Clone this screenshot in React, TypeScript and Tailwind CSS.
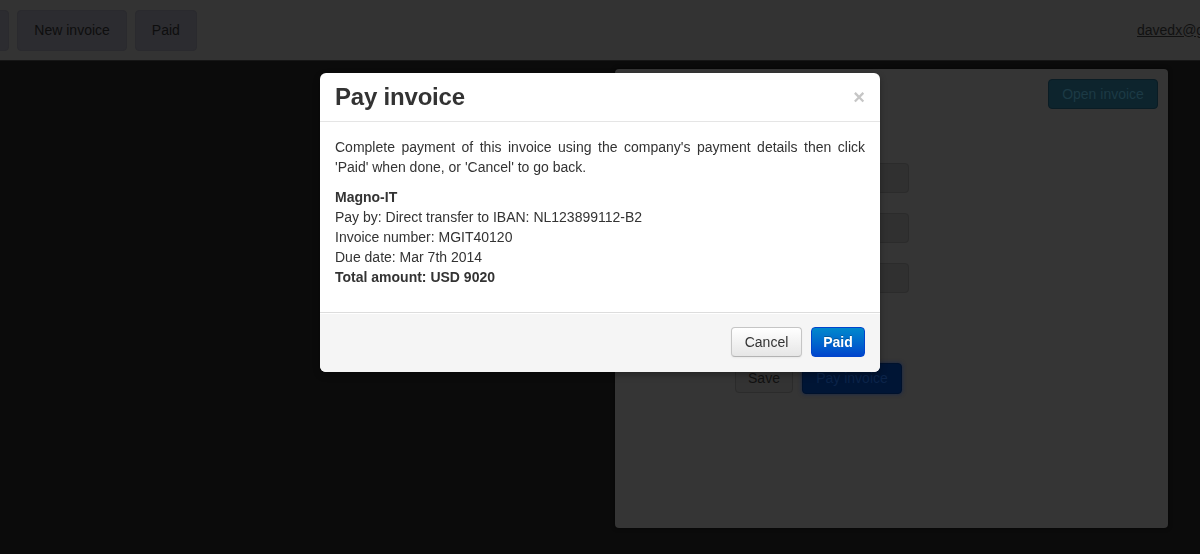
const navButtons = ["Invoices", "New invoice", "Paid"];

const details = [
  "Pay by: Direct transfer to IBAN: NL123899112-B2",
  "Invoice number: MGIT40120",
  "Due date: Mar 7th 2014",
];

function PayInvoiceModal() {
  return (
    <div className="fixed inset-0 z-10">
      <div className="mx-auto mt-[73px] w-[560px] overflow-hidden rounded-[6px] bg-white text-[#333] shadow-[0_3px_7px_rgba(0,0,0,0.3)]">
        <div className="flex items-start justify-between border-b border-[#e5e5e5] px-[15px] py-[9px]">
          <h3 className="text-[24px] font-bold leading-[30px] tracking-[-0.2px]">Pay invoice</h3>
          <button className="mt-[5px] text-[20px] font-bold leading-[20px] text-[#c6c6c6]">×</button>
        </div>
        <div className="px-[15px] pt-[15px] pb-[15px] text-[14px] leading-[20px]">
          <p className="mb-[10px] text-justify">
            Complete payment of this invoice using the company's payment details then click 'Paid' when
            done, or 'Cancel' to go back.
          </p>
          <p className="mb-[10px]">
            <strong>Magno-IT</strong>
            <br />
            {details.map((line) => (
              <span key={line}>
                {line}
                <br />
              </span>
            ))}
            <strong>Total amount: USD 9020</strong>
          </p>
        </div>
        <div className="flex justify-end gap-[9px] border-t border-[#dddddd] bg-[#f5f5f5] px-[15px] pt-[14px] pb-[15px] shadow-[inset_0_1px_0_#ffffff]">
          <button className="h-[30px] w-[71px] rounded-[4px] border border-[#c5c5c5] border-b-[#b3b3b3] bg-gradient-to-b from-white to-[#e6e6e6] text-[14px] text-[#333] shadow-[0_1px_2px_rgba(0,0,0,0.05)]">
            Cancel
          </button>
          <button className="h-[30px] w-[54px] rounded-[4px] border border-[#0044cc] bg-gradient-to-b from-[#0088cc] to-[#0044cc] text-[14px] font-bold text-white [text-shadow:0_-1px_0_rgba(0,0,0,0.25)]">
            Paid
          </button>
        </div>
      </div>
    </div>
  );
}

export default function App() {
  return (
    <div
      className="relative h-[554px] w-full overflow-hidden bg-[#0b0b0b] text-[14px]"
      style={{ fontFamily: '"Liberation Sans", Arial, sans-serif' }}
    >
      {/* dimmed page behind the modal backdrop */}
      <header className="flex h-[61px] items-center border-b border-[#161616] bg-[#333333]">
        <nav className="-ml-[76px] flex gap-[8px]">
          {navButtons.map((name) => (
            <button
              key={name}
              className="h-[41px] rounded-[4px] border border-[#2a2a2e] bg-[#2c2c30] px-[16px] text-[14px] text-[#0e0e0e]"
            >
              {name}
            </button>
          ))}
        </nav>
        <div className="ml-auto w-[63px] whitespace-nowrap">
          <a className="text-[14px] text-[#111] underline">davedx@gmail.com</a>
        </div>
      </header>

      <main className="flex justify-end pt-[8px] pr-[32px]">
        <section className="h-[459px] w-[553px] rounded-[4px] bg-[#353535] p-[10px] shadow-[0_0_4px_rgba(0,0,0,0.6)]">
          <div className="flex justify-end">
            <button className="h-[30px] w-[110px] rounded-[4px] border border-[#0a1c24] bg-[#0d242d] text-[14px] text-[#1c3a45]">
              Open invoice
            </button>
          </div>
          <form className="mt-[54px] flex flex-col gap-[20px] pl-[64px]">
            {["Company", "Amount", "Due date"].map((label) => (
              <div key={label}>
                <label className="sr-only">{label}</label>
                <div className="h-[30px] w-[220px] rounded-[4px] border border-[#2b2b2b] bg-[#303030]" />
              </div>
            ))}
            <div className="mt-[50px] flex gap-[9px] pl-[46px]">
              <button className="h-[30px] w-[58px] rounded-[4px] border border-[#2b2b2b] bg-[#333333] text-[14px] text-[#111]">
                Save
              </button>
              <button className="h-[31px] w-[100px] rounded-[4px] border border-[#00112b] bg-[#001535] text-[14px] text-[#0c244a] shadow-[0_0_4px_rgba(0,30,90,0.6)]">
                Pay invoice
              </button>
            </div>
          </form>
        </section>
      </main>

      <PayInvoiceModal />
    </div>
  );
}
